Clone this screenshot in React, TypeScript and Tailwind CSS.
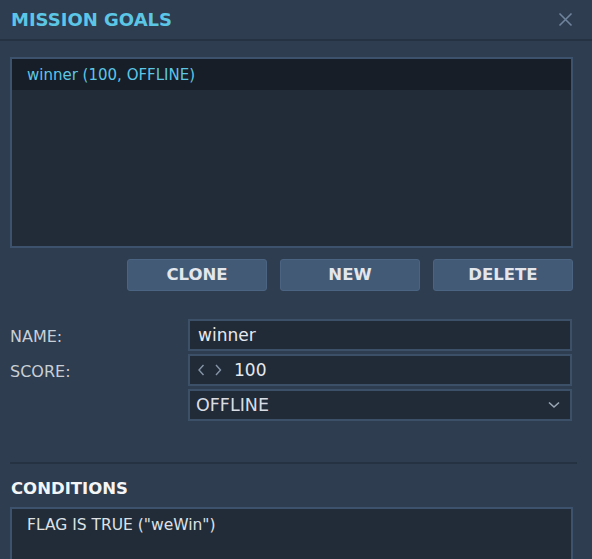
import React from "react";

export default function App() {
  return (
    <div
      className="w-[592px] h-[559px] overflow-hidden bg-[#2e3d4f] text-[#dfe4ea]"
      style={{ fontFamily: '"DejaVu Sans", Verdana, sans-serif' }}
    >
      <div className="h-[41px] flex items-center justify-between pl-[11px] pr-[19px] border-b-2 border-[#243242]">
        <div className="text-[18px] font-bold text-[#5cc6e6]">MISSION GOALS</div>
        <svg width="15" height="15" viewBox="0 0 15 15" className="mt-[-1px]">
          <path d="M1.5 1.5 L13.5 13.5 M13.5 1.5 L1.5 13.5" stroke="#6f849c" strokeWidth="1.6" />
        </svg>
      </div>

      <div className="pl-[10px] pr-[19px] pt-[16px]">
        <div className="h-[191px] border-2 border-[#3d526c] bg-[#222c39]">
          <div className="h-[31px] bg-[#171e27] flex items-center pl-[15px] pt-[1px] text-[15px] text-[#5cc6e6]">
            winner (100, OFFLINE)
          </div>
        </div>
      </div>

      <div className="flex justify-end gap-[13px] pr-[19px] pt-[11px]">
        {["CLONE", "NEW", "DELETE"].map((t) => (
          <div
            key={t}
            className="w-[140px] h-[32px] rounded-[3px] bg-[#435a77] border border-[#4b6482] flex items-center justify-center pt-[1px] text-[16.5px] font-bold text-[#e3e7ec]"
          >
            {t}
          </div>
        ))}
      </div>

      <div className="grid grid-cols-[178px_1fr] gap-y-[3px] pl-[10px] pr-[20px] pt-[28px] text-[16px]">
        <div className="flex items-center text-[#c9cfd6] pt-[3px]">NAME:</div>
        <div className="h-[32px] bg-[#212b38] border-2 border-[#3c5068] flex items-center pl-[8px] pt-[2px] text-[17px] text-[#e6e9ed]">
          winner
        </div>
        <div className="flex items-center text-[#c9cfd6] pt-[3px]">SCORE:</div>
        <div className="h-[32px] bg-[#212b38] border-2 border-[#3c5068] flex items-center pl-[7px] text-[17px] text-[#e6e9ed]">
          <svg width="26" height="14" viewBox="0 0 26 14" className="mr-[11px]">
            <path d="M6.5 2 L2 7 L6.5 12" stroke="#8695a7" strokeWidth="1.4" fill="none" />
            <path d="M19 2 L23.5 7 L19 12" stroke="#8695a7" strokeWidth="1.4" fill="none" />
          </svg>
          <span className="pt-[2px]">100</span>
        </div>
        <div />
        <div className="h-[32px] bg-[#212b38] border-2 border-[#3c5068] flex items-center justify-between pl-[6px] pr-[10px] text-[17.5px] text-[#d9dde3]">
          <span className="pt-[1px]">OFFLINE</span>
          <svg width="12" height="8" viewBox="0 0 12 8">
            <path d="M1 1.5 L6 6 L11 1.5" stroke="#9aa6b4" strokeWidth="1.6" fill="none" />
          </svg>
        </div>
      </div>

      <div className="mx-[10px] mt-[41px] border-t-2 border-[#243242] w-[567px]" />

      <div className="pl-[11px] pt-[13px] text-[16.5px] font-bold text-[#f3f5f7]">CONDITIONS</div>

      <div className="pl-[10px] pr-[19px] pt-[5px]">
        <div className="h-[80px] border-2 border-[#3d526c] bg-[#222c39] pl-[15px] pt-[5px] text-[15.5px] text-[#dde1e6]">
          FLAG IS TRUE ("weWin")
        </div>
      </div>
    </div>
  );
}
